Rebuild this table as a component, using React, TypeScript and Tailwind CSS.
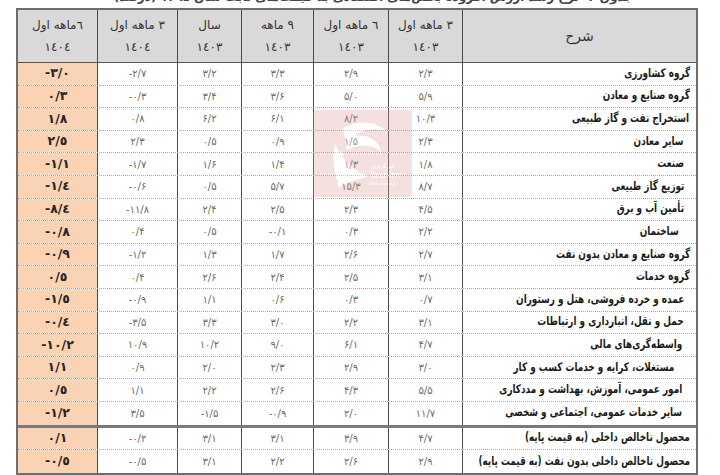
import React from "react";

type Row = { label: string; pr: string; v: string[] };

const rows: Row[] = [
  { label: "گروه کشاورزی", pr: "pr-[6px]", v: ["-۳/۰", "-۲/۷", "۳/۲", "۳/۳", "۲/۹", "۲/۳"] },
  { label: "گروه صنایع و معادن", pr: "pr-[6px]", v: ["۰/۳", "-۰/۳", "۳/۴", "۳/۶", "۵/۰", "۵/۹"] },
  { label: "استخراج نفت و گاز طبیعی", pr: "pr-[7px]", v: ["۱/۸", "۰/۸", "۶/۲", "۶/۱", "۸/۲", "۱۰/۳"] },
  { label: "سایر معادن", pr: "pr-[12px]", v: ["۲/٥", "۲/۳", "۰/۵", "۰/۹", "۱/۵", "۲/۳"] },
  { label: "صنعت", pr: "pr-[12px]", v: ["-۱/۱", "-۱/۷", "۱/۶", "۱/۴", "۱/۳", "۱/۸"] },
  { label: "توزیع گاز طبیعی", pr: "pr-[12px]", v: ["-۱/٤", "-۰/۶", "۰/۵", "۵/۷", "۱۵/۳", "۸/۷"] },
  { label: "تأمین آب و برق", pr: "pr-[12px]", v: ["-۸/٤", "-۱۱/۸", "۲/۴", "۲/۵", "۲/۳", "۴/۵"] },
  { label: "ساختمان", pr: "pr-[17px]", v: ["-۰/۸", "۰/۴", "۰/۵", "-۰/۱", "۰/۳", "۲/۲"] },
  { label: "گروه صنایع و معادن بدون نفت", pr: "pr-[6px]", v: ["-۰/۹", "-۱/۲", "۱/۳", "۱/۷", "۲/۶", "۲/۷"] },
  { label: "گروه خدمات", pr: "pr-[6px]", v: ["۰/٥", "۰/۴", "۲/۶", "۲/۴", "۲/۵", "۳/۱"] },
  { label: "عمده و خرده فروشی، هتل و رستوران", pr: "pr-[12px]", v: ["-۱/٥", "-۰/۹", "۱/۱", "۰/۶", "۰/۳", "۰/۷"] },
  { label: "حمل و نقل، انبارداری و ارتباطات", pr: "pr-[12px]", v: ["-۰/٤", "-۳/۵", "۳/۳", "۳/۰", "۲/۲", "۳/۱"] },
  { label: "واسطه‌گری‌های مالی", pr: "pr-[14px]", v: ["-۱۰/۲", "۱۰/۹", "۱۰/۲", "۹/۰", "۶/۱", "۴/۷"] },
  { label: "مستغلات، کرایه و خدمات کسب و کار", pr: "pr-[22px]", v: ["۱/۱", "۰/۹", "۲/۰", "۲/۳", "۲/۹", "۳/۰"] },
  { label: "امور عمومی، آموزش، بهداشت و مددکاری", pr: "pr-[14px]", v: ["۰/٥", "۱/۱", "۲/۲", "۲/۶", "۴/۳", "۵/۵"] },
  { label: "سایر خدمات عمومی، اجتماعی و شخصی", pr: "pr-[14px]", v: ["-۱/۲", "۳/۵", "-۱/۵", "-۰/۹", "۲/۰", "۱۱/۷"] },
];

const rows2: Row[] = [
  { label: "محصول ناخالص داخلی (به قیمت پایه)", pr: "pr-[6px]", v: ["۰/۱", "-۰/۲", "۳/۱", "۳/۱", "۳/۹", "۴/۷"] },
  { label: "محصول ناخالص داخلی بدون نفت (به قیمت پایه)", pr: "pr-[6px]", v: ["-۰/٥", "-۰/۵", "۳/۱", "۲/۲", "۲/۶", "۲/۹"] },
];

const headers: [string, string][] = [
  ["٦ماهه اول", "۱٤۰٤"],
  ["۳ ماهه اول", "۱٤۰٤"],
  ["سال", "۱٤۰۳"],
  ["۹ ماهه", "۱٤۰۳"],
  ["٦ ماهه اول", "۱٤۰۳"],
  ["۳ ماهه اول", "۱٤۰۳"],
];

const grid = "grid grid-cols-[79px_80px_64px_72px_75px_74px_1fr]";
const font = "font-['DejaVu_Sans',sans-serif]";

function DataRow({ r, h, last }: { r: Row; h: string; last?: boolean }) {
  return (
    <div className={`${grid} ${h} ${last ? "" : "border-b border-dotted border-[#a8a8a8]"}`}>
      <div className="flex items-center justify-center bg-[#f9d3b3]">
        <span className={`${font} text-[12.5px] font-bold text-[#262626] [direction:ltr] [unicode-bidi:bidi-override]`}>
          {r.v[0]}
        </span>
      </div>
      {r.v.slice(1).map((x, i) => (
        <div key={i} className="flex items-center justify-center border-l border-[#4a4a4a]">
          <span className={`${font} text-[10px] text-[#6a6a6a] [direction:ltr] [unicode-bidi:bidi-override]`}>{x}</span>
        </div>
      ))}
      <div dir="rtl" className={`flex items-center overflow-hidden border-l border-[#4a4a4a] ${r.pr}`}>
        <span
          className={`inline-block -translate-y-[1px] origin-right scale-x-[0.74] whitespace-nowrap ${font} text-[12px] font-bold text-[#1c1c1c]`}
        >
          {r.label}
        </span>
      </div>
    </div>
  );
}

export default function App() {
  return (
    <div className="relative w-[720px] h-[475px] overflow-hidden bg-white">
      <div className="h-[8px] overflow-hidden">
        <div
          dir="rtl"
          className={`-mt-[12px] w-[633px] ${font} text-[12px] font-bold text-[#444] whitespace-nowrap`}
        >
          جدول ۲- نرخ رشد ارزش افزوده بخش‌های اقتصادی به قیمت‌های ثابت سال ۱۳۹۵ (درصد)
        </div>
      </div>
      <div className="ml-[16px] w-[682px] border-2 border-[#6e6e6e]">
        <div className={`${grid} h-[53px] bg-[#d9d9d9] border-b border-[#555]`}>
          {headers.map(([a, b], i) => (
            <div
              key={i}
              className={`flex flex-col items-center justify-center gap-[4px] ${i > 0 ? "border-l border-[#4a4a4a]" : ""} ${font} text-[12px] text-[#333]`}
            >
              <span dir="rtl">{a}</span>
              <span className="[direction:ltr] [unicode-bidi:bidi-override]">{b}</span>
            </div>
          ))}
          <div dir="rtl" className={`flex items-center justify-center border-l border-[#4a4a4a] ${font} text-[14px] text-[#333]`}>
            شرح
          </div>
        </div>
        {rows.map((r, i) => (
          <DataRow key={i} r={r} h="h-[22.6px]" last={i === rows.length - 1} />
        ))}
        <div className="h-[3px] bg-[#7a7a7a]" />
        {rows2.map((r, i) => (
          <DataRow key={i} r={r} h="h-[22.8px]" last={i === rows2.length - 1} />
        ))}
      </div>
      <div className="pointer-events-none absolute left-[313px] top-[110px] w-[99px] h-[87px] opacity-[0.3]">
        <svg width="99" height="87" viewBox="0 0 99 87">
          <rect x="0" y="0" width="99" height="87" rx="3" fill="#e09a9a" />
          <path d="M30 18 C 44 10, 62 10, 74 22 C 66 18, 50 18, 42 26 C 54 24, 66 30, 68 42 C 60 34, 44 34, 34 40 Z" fill="#fff" />
          <path d="M22 34 C 30 50, 40 62, 56 66 C 46 70, 34 70, 26 78 C 22 64, 18 50, 22 34 Z" fill="#fff" />
          <circle cx="36" cy="30" r="3" fill="#fff" />
          <circle cx="28" cy="44" r="2.5" fill="#fff" />
          <text x="58" y="58" fontSize="6" fill="#fff" fontFamily="DejaVu Sans">خبرگزاری</text>
          <text x="56" y="68" fontSize="9" fill="#fff" fontFamily="DejaVu Sans">Tasnim</text>
          <text x="56" y="75" fontSize="4" fill="#fff" fontFamily="DejaVu Sans">News Agency</text>
        </svg>
      </div>
    </div>
  );
}
